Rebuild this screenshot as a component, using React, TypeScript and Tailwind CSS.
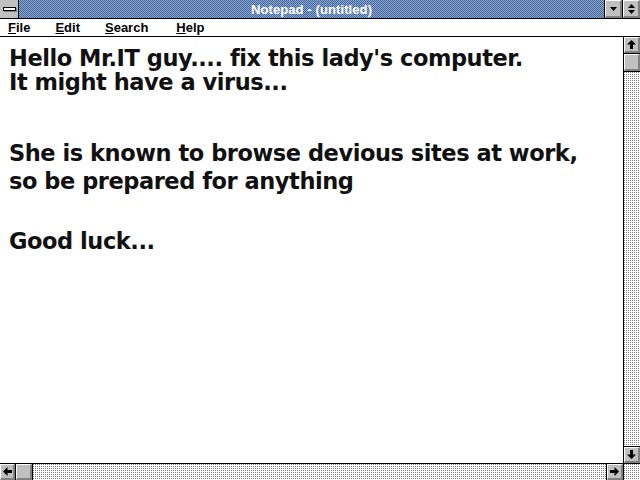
import React from "react";

const dots =
  "bg-white bg-[image:conic-gradient(from_0deg_at_1px_1px,#ffffff_75%,#808080_0)] bg-[length:2px_2px]";

function Bevel({ children, className = "" }: { children?: React.ReactNode; className?: string }) {
  return (
    <div
      className={
        "bg-[#c0c0c0] border-t border-l border-t-white border-l-white border-r-2 border-b-2 border-r-[#808080] border-b-[#808080] flex items-center justify-center " +
        className
      }
    >
      {children}
    </div>
  );
}

function Arrow({ dir }: { dir: "up" | "down" | "left" | "right" }) {
  const rot = { up: 0, down: 180, left: 270, right: 90 }[dir];
  return (
    <svg width="9" height="9" viewBox="0 0 9 9" style={{ transform: `rotate(${rot}deg)` }}>
      <path d="M4.5 0 L9 4.5 L6 4.5 L6 9 L3 9 L3 4.5 L0 4.5 Z" fill="#000" />
    </svg>
  );
}

export default function App() {
  return (
    <div className="w-[640px] h-[480px] flex flex-col bg-white overflow-hidden font-['Liberation_Sans',sans-serif]">
      {/* title bar */}
      <div className="h-[19px] flex border-b border-black shrink-0">
        <div className="w-[19px] h-[18px] bg-[#c0c0c0] border-r border-black flex items-center justify-center">
          <div className="w-[13px] h-[4px] bg-white border border-black shadow-[1px_1px_0_#808080]" />
        </div>
        <div className="flex-1 flex items-center justify-center bg-[#6386bb] bg-[image:repeating-conic-gradient(#44689f_0_25%,#8ea6cc_0_50%)] bg-[length:2px_2px]">
          <span className="text-white font-bold text-[13px] leading-none tracking-[0.1px]">Notepad - (untitled)</span>
        </div>
        <div className="border-l border-black flex">
          <Bevel className="w-[17px] h-[18px]">
            <svg width="7" height="4" viewBox="0 0 7 4">
              <path d="M0 0 L7 0 L3.5 4 Z" fill="#000" />
            </svg>
          </Bevel>
        </div>
        <div className="border-l border-black flex">
          <Bevel className="w-[17px] h-[18px] flex-col gap-[2px]">
            <svg width="7" height="4" viewBox="0 0 7 4">
              <path d="M0 4 L7 4 L3.5 0 Z" fill="#000" />
            </svg>
            <svg width="7" height="4" viewBox="0 0 7 4">
              <path d="M0 0 L7 0 L3.5 4 Z" fill="#000" />
            </svg>
          </Bevel>
        </div>
      </div>
      {/* menu bar */}
      <div className="h-[18px] border-b border-black shrink-0 flex items-center text-[13px] font-bold text-black leading-none">
        <span className="ml-[8px]"><u>F</u>ile</span>
        <span className="ml-[25px]"><u>E</u>dit</span>
        <span className="ml-[25px]"><u>S</u>earch</span>
        <span className="ml-[28px]"><u>H</u>elp</span>
      </div>
      {/* body */}
      <div className="flex-1 flex min-h-0">
        <div className="flex-1 pl-[9px] pt-[7px] font-['DejaVu_Sans',sans-serif] font-bold text-[22.5px] leading-[29.5px] tracking-[-0.45px] text-[#111]">
          <div className="h-[24px] whitespace-pre">Hello Mr.IT guy.... fix this lady's computer.</div>
          <div className="h-[35.5px] whitespace-pre">It might have a virus...</div>
          <div className="h-[35.5px]" />
          <div className="h-[28px] whitespace-pre">She is known to browse devious sites at work,</div>
          <div className="h-[30px] whitespace-pre">so be prepared for anything</div>
          <div className="h-[30px]" />
          <div className="h-[29.5px] whitespace-pre">Good luck...</div>
        </div>
        <div className="w-[17px] border-l border-black flex flex-col">
          <Bevel className="h-[16px] w-[16px] shrink-0">
            <Arrow dir="up" />
          </Bevel>
          <div className="h-[18px] shrink-0 border-t border-black">
            <Bevel className="h-[17px] w-[16px]" />
          </div>
          <div className={"flex-1 border-t border-black " + dots} />
          <div className="border-t border-black">
            <Bevel className="h-[16px] w-[16px]">
              <Arrow dir="down" />
            </Bevel>
          </div>
        </div>
      </div>
      {/* horizontal scrollbar */}
      <div className="h-[17px] border-t border-black flex shrink-0">
        <Bevel className="w-[15px] h-[16px]">
          <Arrow dir="left" />
        </Bevel>
        <div className="border-l border-black">
          <Bevel className="w-[16px] h-[16px]" />
        </div>
        <div className={"flex-1 border-l border-black " + dots} />
        <div className="border-l border-black">
          <Bevel className="w-[16px] h-[16px]">
            <Arrow dir="right" />
          </Bevel>
        </div>
        <div className={"w-[17px] border-l border-black " + dots} />
      </div>
    </div>
  );
}
